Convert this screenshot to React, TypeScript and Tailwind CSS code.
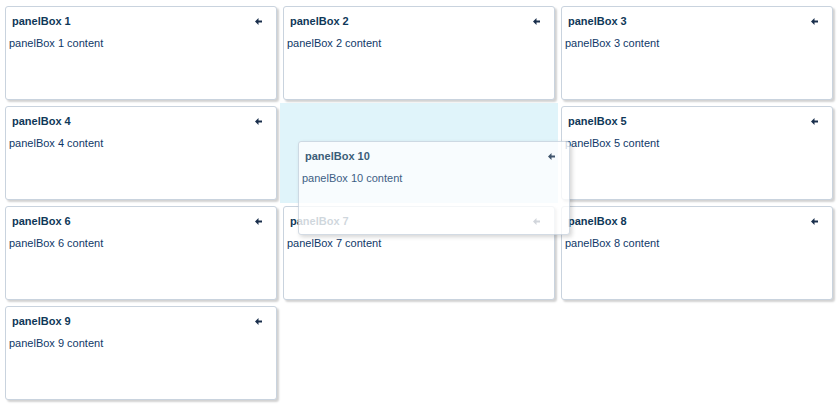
import React from 'react'

const font = { fontFamily: '"Liberation Sans", Arial, sans-serif' }

function Arrow() {
  return (
    <svg width="7" height="7" viewBox="0 0 7 7" className="text-[#1a2f4c] mr-[1px]" aria-hidden="true">
      <path d="M0 3.5 L3.5 0 L3.5 2.5 L7 2.5 L7 4.5 L3.5 4.5 L3.5 7 Z" fill="currentColor" />
    </svg>
  )
}

function PanelBox({ n, className = '' }: { n: number; className?: string }) {
  return (
    <div
      className={`bg-white border border-[#c9d3de] rounded-[3px] shadow-[2px_2px_2px_rgba(0,0,0,0.18)] ${className}`}
    >
      <div className="flex items-center justify-between pl-[6px] pr-[13px] pt-[7px] h-[22px]">
        <span className="text-[11px] font-bold text-[#0f3858] leading-none">panelBox {n}</span>
        <Arrow />
      </div>
      <p className="pl-[3px] pt-[9px] text-[11px] text-[#0f3868] leading-none">panelBox {n} content</p>
    </div>
  )
}

export default function App() {
  const cells: (number | 'ph')[] = [1, 2, 3, 4, 'ph', 5, 6, 7, 8, 9]

  return (
    <div className="relative w-[840px] h-[409px] bg-white overflow-hidden" style={font}>
      <div className="flex flex-wrap pl-[2px] pt-[3px]">
        {cells.map((c, i) =>
          c === 'ph' ? (
            <div key={i} className="w-[278px] h-[100px] bg-[#e0f4fa]" />
          ) : (
            <div key={i} className="w-[278px] h-[100px] p-[3px]">
              <PanelBox n={c} className="w-[272px] h-[94px]" />
            </div>
          )
        )}
      </div>

      {/* dragged panel */}
      <PanelBox
        n={10}
        className="absolute left-[298px] top-[141px] w-[272px] h-[94px] opacity-80 shadow-[2px_2px_4px_rgba(0,0,0,0.2)]"
      />
    </div>
  )
}
